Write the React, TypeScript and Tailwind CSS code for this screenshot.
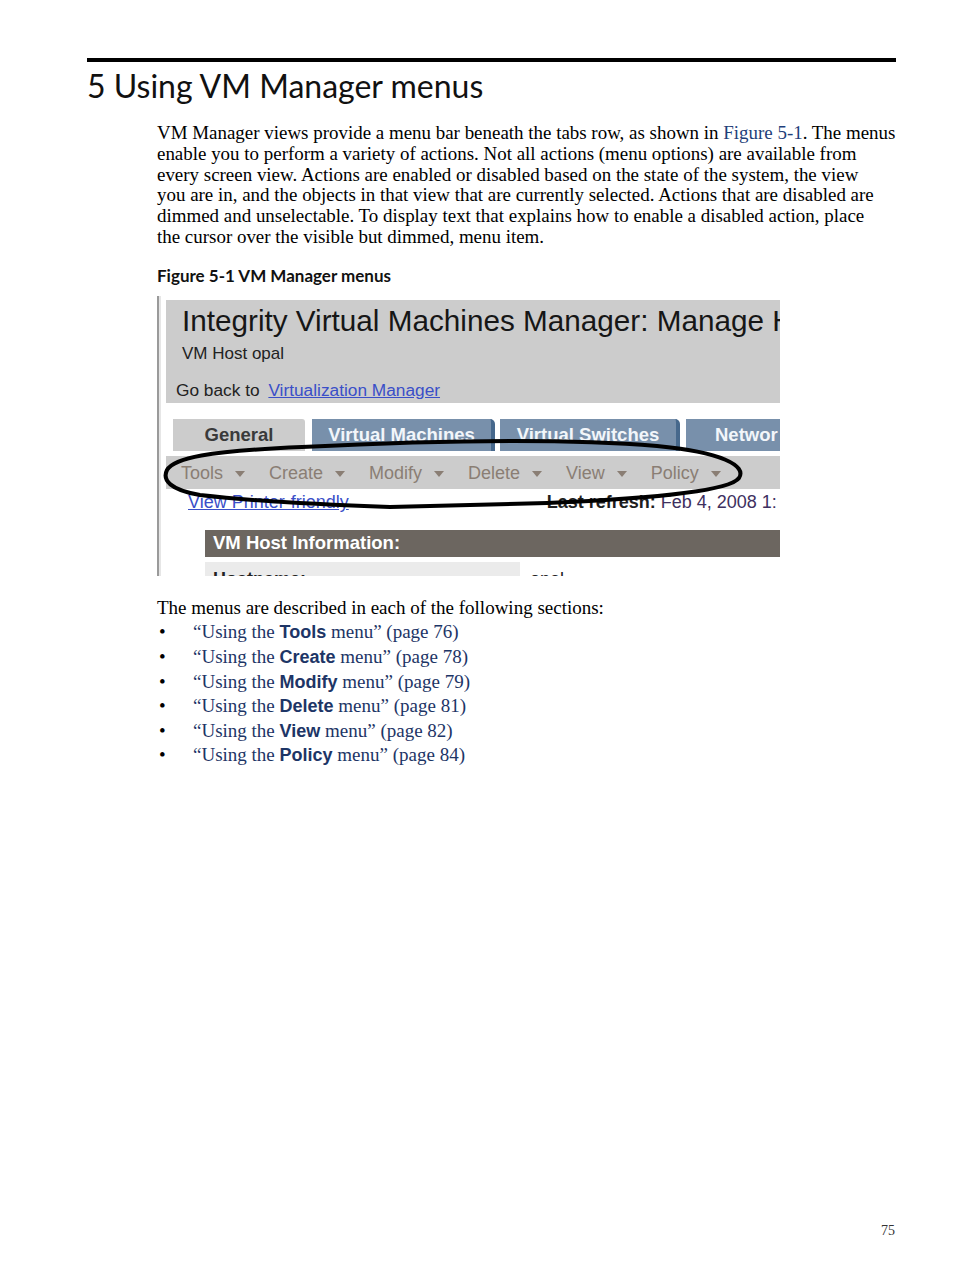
const serif = { fontFamily: '"Liberation Serif", "Times New Roman", serif' };

const bodyLines = [
  <>VM Manager views provide a menu bar beneath the tabs row, as shown in <span className="text-[#1f3f7a]">Figure 5-1</span>. The menus</>,
  <>enable you to perform a variety of actions. Not all actions (menu options) are available from</>,
  <>every screen view. Actions are enabled or disabled based on the state of the system, the view</>,
  <>you are in, and the objects in that view that are currently selected. Actions that are disabled are</>,
  <>dimmed and unselectable. To display text that explains how to enable a disabled action, place</>,
  <>the cursor over the visible but dimmed, menu item.</>,
];

const menus = [
  { name: "Tools", page: 76 },
  { name: "Create", page: 78 },
  { name: "Modify", page: 79 },
  { name: "Delete", page: 81 },
  { name: "View", page: 82 },
  { name: "Policy", page: 84 },
];

const MenuItem = ({ label }: { label: string }) => (
  <div className="flex items-center mr-[24px]">
    <span>{label}</span>
    <span className="ml-[12px] mt-[2px] w-0 h-0 border-l-[5px] border-r-[5px] border-t-[6px] border-l-transparent border-r-transparent border-t-[#8a7e74]" />
  </div>
);

const Figure = () => (
  <div
    className="relative shrink-0 mt-[10px] ml-[157px] w-[623px] h-[280px] overflow-hidden bg-white border-l-[2px] border-[#9a9a9a] text-[17px]"
    style={{ fontFamily: '"Liberation Sans", Arial, sans-serif' }}
  >
    <div className="flex h-full">
      <div className="w-[2px] shrink-0 bg-[#e6e6e6]" />
      <div className="flex-1 min-w-0 pl-[5px] pt-[4px] flex flex-col">
        {/* page header */}
        <div className="shrink-0 bg-[#cccccc] h-[103px] pt-[4px] flex flex-col">
          <div className="pl-[16px] text-[29.7px] leading-[34px] text-[#161616] whitespace-nowrap">
            Integrity Virtual Machines Manager: Manage H
          </div>
          <div className="pl-[16px] mt-[6px] leading-[20px] text-[#222]">VM Host opal</div>
          <div className="pl-[10px] mt-[16px] leading-[20px] text-[17.3px] text-[#222] whitespace-nowrap">
            Go back to <span className="ml-[4px] text-[#3a4fc8] underline">Virtualization Manager</span>
          </div>
        </div>

        {/* tabs */}
        <div className="shrink-0 flex mt-[16px] pl-[7px] h-[32px] font-bold text-[18.5px] whitespace-nowrap">
          <div className="w-[132px] shrink-0 bg-[#cccccc] text-[#3a3a3a] flex items-center justify-center rounded-tr-[3px]">
            General
          </div>
          <div className="ml-[7px] w-[183px] shrink-0 bg-[#7890ab] border-r-[4px] border-[#46688c] text-[#f2f6fa] flex items-center justify-center rounded-tr-[5px]">
            Virtual Machines
          </div>
          <div className="ml-[5px] w-[180px] shrink-0 bg-[#7890ab] border-r-[4px] border-[#46688c] text-[#f2f6fa] flex items-center justify-center rounded-tr-[5px]">
            Virtual Switches
          </div>
          <div className="ml-[6px] w-[180px] shrink-0 bg-[#7890ab] text-[#f2f6fa] flex items-center pl-[29px]">
            Networ
          </div>
        </div>

        {/* menu bar */}
        <div className="shrink-0 mt-[5px] h-[33px] bg-[#cccccc] flex items-center pl-[15px] pt-[2px] text-[18px] text-[#8a7e74] whitespace-nowrap">
          {menus.map((m) => (
            <MenuItem key={m.name} label={m.name} />
          ))}
        </div>

        {/* links row */}
        <div className="shrink-0 flex items-center h-[26px] pt-[2px] text-[18px] whitespace-nowrap">
          <span className="ml-[22px] text-[#3a4fc8] underline">View Printer-friendly</span>
          <span className="ml-[198px] text-[#1e1e1e]">
            <span className="font-bold">Last refresh:</span>
            <span className="text-[#3e3060]"> Feb 4, 2008 1:</span>
          </span>
        </div>

        {/* info header */}
        <div className="shrink-0 mt-[15px] ml-[39px] h-[27px] bg-[#6c6660] text-white text-[18.5px] font-bold flex items-center pl-[8px]">
          VM Host Information:
        </div>
        <div className="shrink-0 mt-[5px] ml-[39px] flex h-[26px] text-[18px]">
          <div className="w-[315px] bg-[#ebebeb] pl-[8px] pt-[7px] font-bold text-[#222] leading-[20px]">Hostname:</div>
          <div className="pl-[10px] pt-[7px] text-[#222] leading-[20px]">opal</div>
        </div>
      </div>
    </div>

    {/* hand-drawn highlight ellipse */}
    <svg className="absolute inset-0 pointer-events-none" width="623" height="280" viewBox="157 296 623 280">
      <path
        d="M300 447 C 420 441, 560 438, 655 446 C 720 452, 745 466, 737 478 C 727 492, 640 499, 545 503 L 388 507 C 330 505, 250 501, 198 495 C 168 490, 160 480, 165 470 C 172 458, 205 451, 300 447 Z"
        fill="none"
        stroke="#000"
        strokeWidth="4"
        strokeLinejoin="round"
      />
    </svg>
  </div>
);

export default function App() {
  return (
    <div className="w-[954px] min-h-[1271px] bg-white text-black flex flex-col">
      <div className="shrink-0 mt-[58px] ml-[87px] w-[809px] h-[4px] bg-black" />
      <h1
        className="mt-[4px] ml-[87px] text-[32px] leading-[40px] text-[#111]"
        style={{ fontFamily: 'Lato, "Noto Sans", sans-serif' }}
      >
        5 Using VM Manager menus
      </h1>

      <div className="mt-[17px] ml-[157px] text-[18.95px] leading-[20.8px]" style={serif}>
        {bodyLines.map((l, i) => (
          <div key={i} className="whitespace-nowrap">
            {l}
          </div>
        ))}
      </div>

      <div
        className="mt-[18px] ml-[157px] text-[17px] leading-[20px] font-bold text-[#111]"
        style={{ fontFamily: 'Lato, "Noto Sans", sans-serif' }}
      >
        Figure 5-1 VM Manager menus
      </div>

      <Figure />

      <div className="mt-[20px] ml-[157px] text-[19px]" style={serif}>
        <div className="leading-[24.6px]">The menus are described in each of the following sections:</div>
        {menus.map((m) => (
          <div key={m.name} className="flex h-[24.6px] leading-[24.6px] whitespace-nowrap">
            <span className="w-[36px] pl-[2px]">•</span>
            <span className="text-[#1d3566]">
              “Using the{" "}
              <span className="font-bold text-[18px] leading-none" style={{ fontFamily: '"Liberation Sans", Arial, sans-serif' }}>
                {m.name}
              </span>{" "}
              menu” (page {m.page})
            </span>
          </div>
        ))}
      </div>

      <div className="mt-auto mb-[32px] ml-[881px] text-[14px] leading-[16px] text-[#333]" style={serif}>
        75
      </div>
    </div>
  );
}
